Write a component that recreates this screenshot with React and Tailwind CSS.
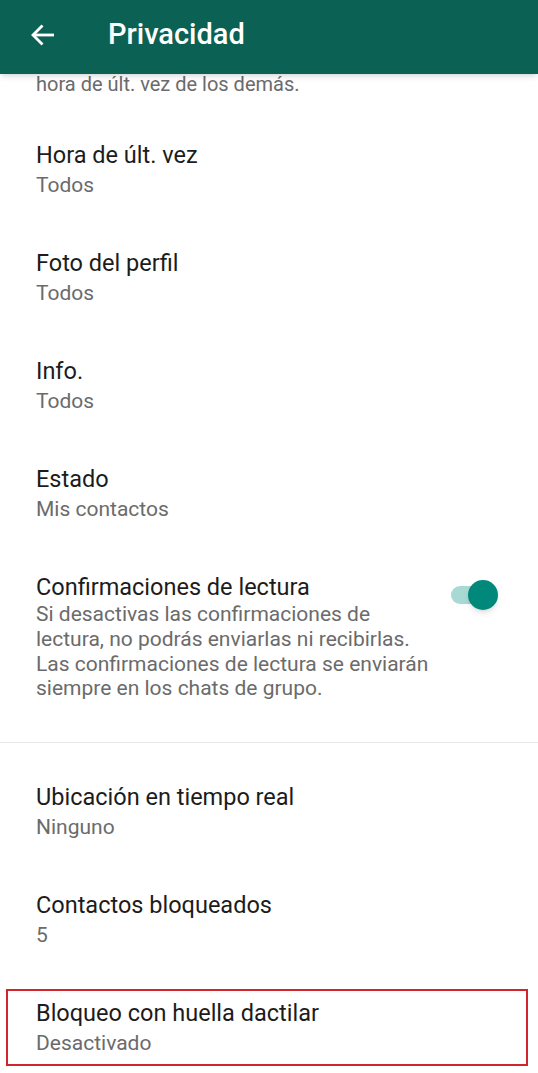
import React from 'react';

const rows = [
  { title: 'Hora de últ. vez', sub: 'Todos' },
  { title: 'Foto del perfil', sub: 'Todos' },
  { title: 'Info.', sub: 'Todos' },
  { title: 'Estado', sub: 'Mis contactos' },
];

const rows2 = [
  { title: 'Ubicación en tiempo real', sub: 'Ninguno' },
  { title: 'Contactos bloqueados', sub: '5' },
];

function Row({ title, sub }) {
  return (
    <div className="px-9 py-6">
      <div className="text-[23.5px] leading-[30px] text-[#1c1c1c]">{title}</div>
      <div className="text-[21px] leading-[30px] text-[#6b6b6b]">{sub}</div>
    </div>
  );
}

export default function App() {
  return (
    <div className="w-[538px] h-[1073px] overflow-hidden bg-white font-['Roboto',sans-serif]">
      <div className="relative z-10 h-[74px] bg-[#0b6154] flex items-center pb-[4px] shadow-md">
        <svg className="ml-[30px]" width="25" height="22" viewBox="0 0 25 22" fill="none" stroke="white" strokeWidth="2.8" strokeLinecap="butt" strokeLinejoin="miter">
          <path d="M24 11H3" />
          <path d="M12.5 1.5L3 11l9.5 9.5" />
        </svg>
        <h1 className="ml-[53px] text-[29px] font-medium text-white">Privacidad</h1>
      </div>

      <div className="px-9 text-[20px] leading-[24px] text-[#6b6b6b] -mt-[2px]">
        hora de últ. vez de los demás.
      </div>

      <div className="pt-[20px]">
        {rows.map(r => <Row key={r.title} {...r} />)}

        <div className="flex items-start justify-between pl-9 pr-10 pt-6 pb-[41px] border-b border-[#e6e6e6]">
          <div>
            <div className="text-[23.5px] leading-[30px] text-[#1c1c1c]">Confirmaciones de lectura</div>
            <div className="text-[21px] leading-[24.8px] text-[#6b6b6b] whitespace-nowrap">
              Si desactivas las confirmaciones de<br />
              lectura, no podrás enviarlas ni recibirlas.<br />
              Las confirmaciones de lectura se enviarán<br />
              siempre en los chats de grupo.
            </div>
          </div>
          <div className="relative w-[48px] h-[30px] mt-[8px] shrink-0">
            <div className="absolute left-[1px] top-[6px] w-[42px] h-[18px] rounded-full bg-[#a8dad3]" />
            <div className="absolute right-0 top-0 w-[30px] h-[30px] rounded-full bg-[#00897b] shadow-md" />
          </div>
        </div>

        <div className="pt-[15px]">
          {rows2.map(r => <Row key={r.title} {...r} />)}
        </div>

        <div className="ml-[6px] mr-[10px] mt-[15px] border-2 border-[#cf262d]">
          <div className="pl-[28px] pt-[7px] pb-[6px]">
            <div className="text-[23.5px] leading-[30px] text-[#1c1c1c]">Bloqueo con huella dactilar</div>
            <div className="text-[21px] leading-[30px] text-[#6b6b6b]">Desactivado</div>
          </div>
        </div>
      </div>
    </div>
  );
}
